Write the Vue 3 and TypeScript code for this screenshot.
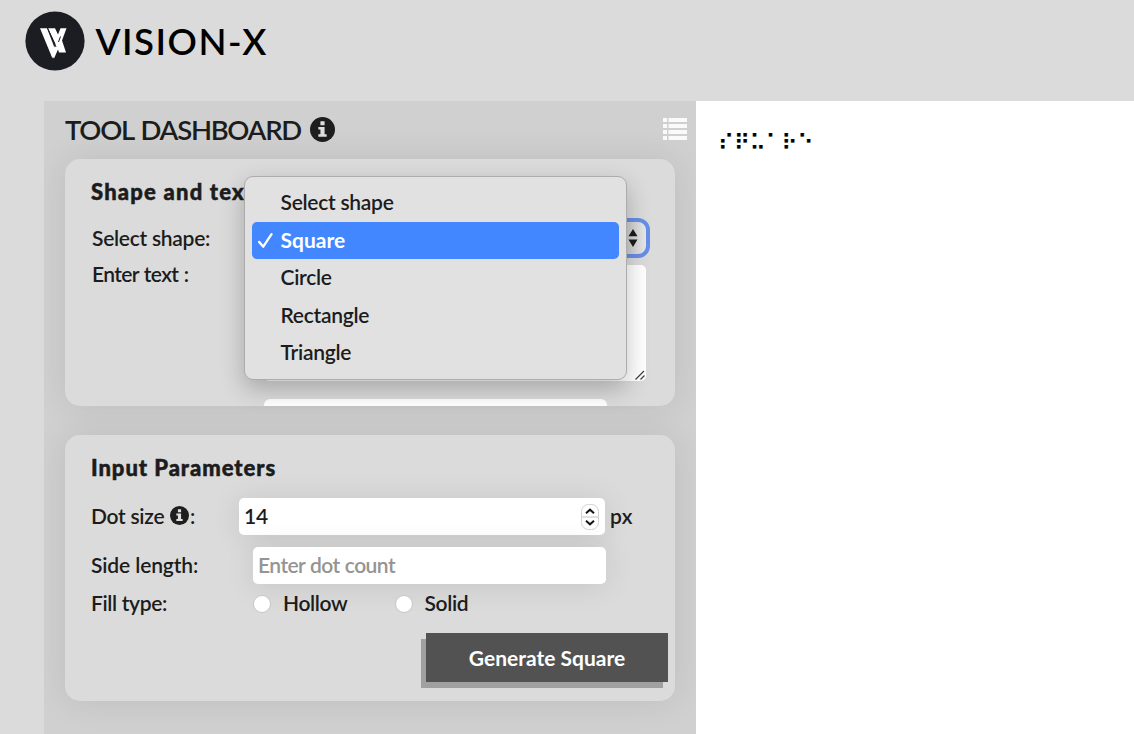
<script setup lang="ts">
import { ref } from 'vue'

const shapes: string[] = ['Select shape', 'Square', 'Circle', 'Rectangle', 'Triangle']
const selected = ref<string>('Square')
const dotSize = ref<string>('14')
const fills: string[] = ['Hollow', 'Solid']
</script>

<template>
  <div class="page">
    <header class="header">
      <svg class="logo" viewBox="0 0 60 60">
        <circle cx="30" cy="30" r="29.6" fill="#1b1d23" />
        <path d="M15 17.200H22L30 38 27.500 47.500Z" fill="#fff" />
        <path d="M23 17.200H30L33 23.500 35.500 17.200H41.500L37 29.500 41 41.500H34L33 38.500 29 47.500 26.500 44 30.500 33Z" fill="#fff" />
        <path d="M22.500 17 31 36M35.500 25.500 33.500 31" stroke="#1b1d23" stroke-width="1" fill="none" />
      </svg>
      <span class="brand">VISION-X</span>
    </header>
    <main class="main">
      <section class="panel">
        <div class="panel-head">
          <h1 class="title">TOOL DASHBOARD</h1>
          <svg class="info" viewBox="0 0 24 24">
            <circle cx="12" cy="12" r="12" fill="#1e1e1e" />
            <path d="M10 4h4v4h-4zM8 9.500h6v7h2v2.500H8v-2.500h2V12H8z" fill="#dedede" />
          </svg>
          <svg class="list" viewBox="0 0 24 22">
            <path d="M0 0h4v4H0zM5.500 0H24v4H5.500zM0 6h4v4H0zM5.500 6H24v4H5.500zM0 12h4v4H0zM5.500 12H24v4H5.500zM0 18h4v4H0zM5.500 18H24v4H5.500z" fill="#fafafa" />
          </svg>
        </div>

        <div class="card shape-card">
          <h2 class="card-title shape-title">Shape and text</h2>
          <div class="row select-row">
            <span class="label l-select">Select shape:</span>
            <div class="select">
              <svg class="arrows" viewBox="0 0 10 18"><path d="M5 0 9.500 7.300H.5ZM.5 10.500H9.500L5 18Z" fill="#1c1c1c" /></svg>
            </div>
          </div>
          <div class="row text-row">
            <span class="label l-enter">Enter text :</span>
            <div class="textarea">
              <svg class="grip" viewBox="0 0 10 10"><path d="M.5 9.500 9 1M5.500 9.500 9.500 5.500" stroke="#444" stroke-width="1.300" fill="none" /></svg>
            </div>
          </div>
          <div class="next-input"></div>
        </div>

        <div class="card param-card">
          <h2 class="card-title param-title">Input Parameters</h2>
          <div class="row dot-row">
            <span class="label l-dot">Dot size</span>
            <svg class="info-small" viewBox="0 0 24 24">
              <circle cx="12" cy="12" r="12" fill="#1e1e1e" />
              <path d="M10 4h4v4h-4zM8 9.500h6v7h2v2.500H8v-2.500h2V12H8z" fill="#dedede" />
            </svg>
            <span class="label">:</span>
            <div class="field number">
              <span class="value">{{ dotSize }}</span>
              <svg class="stepper" viewBox="0 0 18 26">
                <rect x=".5" y=".5" width="17" height="25" rx="7" fill="#fff" stroke="#d2d2d2" />
                <path d="M1 13H17" stroke="#c4c4c4" />
                <path d="M5 9.300 9 5.700 13 9.300M5 16.700 9 20.300 13 16.700" fill="none" stroke="#161616" stroke-width="2" />
              </svg>
            </div>
            <span class="label px">px</span>
          </div>
          <div class="row side-row">
            <span class="label l-side">Side length:</span>
            <div class="field side"><span class="placeholder">Enter dot count</span></div>
          </div>
          <div class="row fill-row">
            <span class="label l-fill">Fill type:</span>
            <label v-for="f in fills" :key="f" class="radio">
              <i class="knob"></i><span class="label">{{ f }}</span>
            </label>
          </div>
          <button class="generate">Generate {{ selected }}</button>
        </div>

        <ul class="menu">
          <li v-for="s in shapes" :key="s" class="option" :class="{ active: s === selected }">
            <span class="check">
              <svg v-if="s === selected" viewBox="0 0 16 16"><path d="M2 9.300 5.900 13.800 13.700 2" fill="none" stroke="#fff" stroke-width="2.200" stroke-linecap="round" stroke-linejoin="round" /></svg>
            </span>
            <span class="option-text">{{ s }}</span>
          </li>
        </ul>
      </section>
      <section class="canvas"><span class="braille">⠎⠟⠥⠁⠗⠑</span></section>
    </main>
  </div>
</template>

<style>
body { margin: 0; overflow: hidden; }
</style>

<style scoped>
* { box-sizing: border-box; }
.page {
  width: 1134px; height: 734px; background: #dbdbdb; color: #1c1c1c;
  display: flex; flex-direction: column; overflow: hidden;
  font-family: Lato, "Liberation Sans", sans-serif; font-size: 21px; font-weight: 600; line-height: 26px;
  letter-spacing: -.27px; white-space: nowrap;
}
.header { height: 101px; flex: none; display: flex; align-items: flex-start; padding: 11px 0 0 24px; }
.logo { width: 60px; height: 60px; margin-left: .5px; }
.brand { margin: 8px 0 0 11px; font-size: 36.500px; line-height: 44px; color: #000; font-weight: 600; letter-spacing: 1.500px; }
.main { flex: 1; display: flex; padding-left: 44px; min-height: 0; }
.panel { position: relative; width: 652px; background: #d0d0d0; padding: 0 21px; overflow: hidden; }
.panel-head { height: 58px; display: flex; }
.title { margin: 12px 0 0; width: 245px; font-size: 27.500px; line-height: 34px; font-weight: 600; letter-spacing: -1.300px; word-spacing: 2px; }
.info { width: 25px; height: 25px; margin-top: 16px; }
.list { width: 24px; height: 22px; margin: 17px -12px 0 auto; }
.card { width: 610px; border-radius: 15px; background: #dbdbdb; box-shadow: 0 0 35px rgba(0, 0, 0, .09); overflow: hidden; display: flex; flex-direction: column; }
.shape-card { height: 247px; }
.param-card { height: 266px; margin-top: 29px; }
.card-title { margin: 19px 0 0 26px; font-size: 22px; line-height: 27px; font-weight: 900; letter-spacing: .95px; -webkit-text-stroke: .5px #1c1c1c; }
.shape-title { letter-spacing: 1.200px; }
.row { display: flex; align-items: center; padding-left: 27px; flex: none; }
.select-row { height: 40px; margin-top: 13px; }
.select { width: 386px; height: 40px; margin-left: auto; margin-right: 25px; border: 4px solid #668fe8; border-radius: 12px; background: linear-gradient(90deg, #ccc 95%, #e8e8e8); display: flex; justify-content: flex-end; align-items: center; padding-right: 8px; }
.arrows { width: 10px; height: 18px; }
.text-row { margin-top: 7px; height: 116px; align-items: flex-start; }
.l-enter { margin-top: -4px; letter-spacing: -.65px; word-spacing: 1px; }
.textarea { width: 382px; height: 116px; margin-left: auto; margin-right: 29px; border-radius: 5px; background: #fff; display: flex; justify-content: flex-end; align-items: flex-end; padding: 1px; }
.grip { width: 10px; height: 10px; }
.next-input { flex: none; width: 343px; height: 36px; margin: 18px 0 0 199px; border-radius: 6px; background: #fff; }
.param-card .row { padding-left: 26px; }
.dot-row { height: 37px; margin-top: 17px; }
.dot-row .label, .value { margin-top: -2px; }
.l-dot { width: 79px; }
.info-small { width: 19px; height: 19px; margin-top: -2px; margin-right: 1px; }
.field { background: #fff; border-radius: 5px; display: flex; align-items: center; padding: 0 5px; box-shadow: 0 2px 30px rgba(0, 0, 0, .1); }
.number { width: 366px; height: 37px; margin-left: auto; justify-content: space-between; padding-right: 6px; }
.stepper { width: 18px; height: 26px; }
.px { width: 65px; margin-left: 5px; letter-spacing: .3px; }
.side-row { height: 37px; margin-top: 12px; }
.side-row .label, .placeholder { margin-top: -2px; }
.l-side { letter-spacing: -.12px; }
.side { width: 353px; height: 37px; margin-left: auto; margin-right: 69px; }
.placeholder { color: #949494; letter-spacing: -.55px; word-spacing: .5px; }
.fill-row { height: 30px; margin-top: 5px; }
.fill-row .label { margin-top: -2px; }
.l-fill { width: 162px; letter-spacing: -.35px; }
.radio { display: flex; align-items: center; width: 141.500px; letter-spacing: -.35px; }
.knob { width: 18px; height: 18px; border-radius: 50%; background: #fff; border: 1px solid #c6c6c6; margin: 0 12px 0 0; }
.generate { flex: none; width: 242px; height: 49px; margin: 14px 7px 0 auto; padding: 0; border: 0; background: #525252; color: #fff; font: inherit; font-weight: 700; letter-spacing: 0; box-shadow: -5px 6px #a0a0a0; }
.menu { position: absolute; left: 200px; top: 75px; width: 383px; height: 204px; margin: 0; padding: 7px; list-style: none; background: #e1e1e1; border: 1px solid #acacac; border-radius: 9px; box-shadow: 0 9px 24px rgba(0, 0, 0, .24); }
.option { height: 37.500px; display: flex; align-items: center; border-radius: 5px; }
.option.active { background: #4287ff; color: #fff; font-weight: 700; letter-spacing: 0; }
.option-text { margin: -1px 0 0 .5px; }
.check { width: 28px; padding-left: 5px; display: flex; }
.check svg { width: 17px; height: 17px; }
.canvas { flex: 1; background: #fff; padding: 28px 0 0 22px; }
.braille { font-family: "DejaVu Sans", sans-serif; font-weight: 400; font-size: 21.700px; letter-spacing: 0; color: #000; text-rendering: geometricPrecision; -webkit-text-stroke: .3px #000; }
</style>
